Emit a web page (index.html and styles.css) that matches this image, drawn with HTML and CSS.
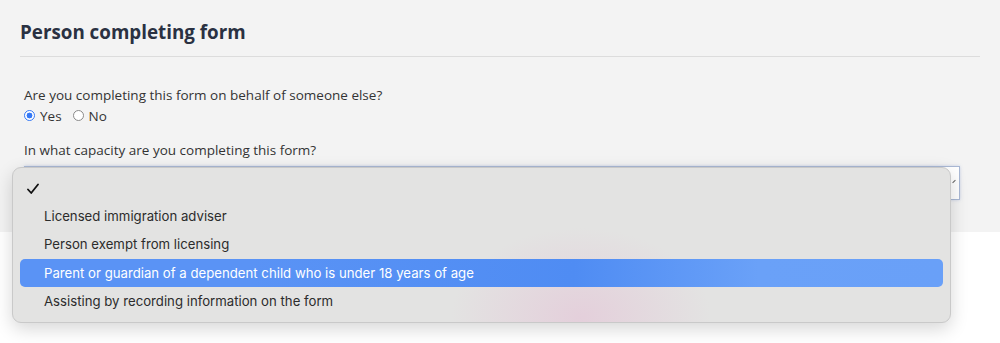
FILE: index.html
```html
<!DOCTYPE html>
<html lang="en">
<head>
    <meta charset="UTF-8">
    <title>Person completing form</title>
    <link rel="stylesheet" href="styles.css">
</head>
<body>
    <div class="panel">
        <h2>Person completing form</h2>

        <div class="field">
            <label class="question">Are you completing this form on behalf of someone else?</label>
            <div class="radios">
                <span class="radio checked"></span><span class="radio-label">Yes</span>
                <span class="radio"></span><span class="radio-label">No</span>
            </div>
        </div>

        <div class="field">
            <label class="question">In what capacity are you completing this form?</label>
            <div class="select-box"><span class="arrow"></span></div>
        </div>
    </div>

    <!-- open dropdown list drawn over the select -->
    <div class="menu">
        <div class="item check-row">
            <svg class="tick" width="12" height="12" viewBox="0 0 12 12">
                <path d="M1 6.5 L4.2 10 L11 1.5" fill="none" stroke="#111" stroke-width="1.8" stroke-linecap="round" stroke-linejoin="round"/>
            </svg>
        </div>
        <div class="item">Licensed immigration adviser</div>
        <div class="item">Person exempt from licensing</div>
        <div class="item active">Parent or guardian of a dependent child who is under 18 years of age</div>
        <div class="item">Assisting by recording information on the form</div>
    </div>
</body>
</html>
```

FILE: styles.css
```css
body {
    margin: 0;
    background-color: #fff;
    font-family: "Open Sans", Arial, sans-serif;
    color: #333;
    position: relative;
    height: 343px;
    overflow: hidden;
}
.panel {
    background-color: #f3f3f3;
    height: 232px;
    padding: 0 20px;
    box-sizing: border-box;
}
h2 {
    margin: 0;
    padding-top: 21px;
    padding-bottom: 13px;
    font-size: 18.8px;
    line-height: 22px;
    font-weight: 700;
    color: #2a3142;
    border-bottom: 1px solid #dcdcdc;
}
.field {
    padding-left: 4px;
}
.field:first-of-type {
    margin-top: 28px;
}
.question {
    display: block;
    font-size: 13.5px;
    line-height: 20px;
    color: #333;
}
.radios {
    display: flex;
    align-items: center;
    height: 21px;
    margin-bottom: 14px;
}
.radio {
    width: 11px;
    height: 11px;
    border: 1px solid #8a8a8a;
    border-radius: 50%;
    background: #fff;
    box-sizing: border-box;
    margin-right: 5px;
}
.radio.checked {
    border: 1px solid #3478f6;
    background: radial-gradient(circle, #3478f6 0 2.7px, #fff 3.2px);
}
.radio-label {
    font-size: 13.5px;
    margin-right: 11px;
}
.select-box {
    position: relative;
    margin-top: 6px;
    height: 34px;
    width: 936px;
    background: #fff;
    border: 1px solid #a9b8d4;
    box-sizing: border-box;
    box-shadow: 0 0 3px rgba(120, 150, 210, 0.35);
}
.arrow {
    position: absolute;
    right: 3px;
    top: 14px;
    width: 4px;
    height: 1px;
    background: #666;
    transform: rotate(-45deg);
}
.menu {
    position: absolute;
    left: 12px;
    top: 167px;
    width: 939px;
    height: 156px;
    box-sizing: border-box;
    padding: 5px 7px 0 7px;
    border-radius: 9px;
    border: 1px solid #c9c9c9;
    background:
        radial-gradient(ellipse 130px 90px at 568px 150px, rgba(228, 205, 218, 0.9), rgba(228, 205, 218, 0)),
        #e3e3e2;
    box-shadow: 0 6px 18px rgba(0, 0, 0, 0.16);
    font-family: Inter, "Noto Sans", sans-serif;
    font-size: 13.2px;
    color: #2c2c2c;
}
.item {
    height: 28.5px;
    line-height: 28.5px;
    padding-left: 24px;
    border-radius: 5px;
    white-space: nowrap;
}
.check-row {
    display: flex;
    align-items: center;
    padding-left: 7px;
}
.tick {
    margin-top: 3px;
}
.item.active {
    color: #fff;
    background: linear-gradient(90deg, #5a93f5 0%, #5a93f5 25%, #4f8cf3 60%, #6aa1f8 80%, #69a0f8 100%);
}
```
